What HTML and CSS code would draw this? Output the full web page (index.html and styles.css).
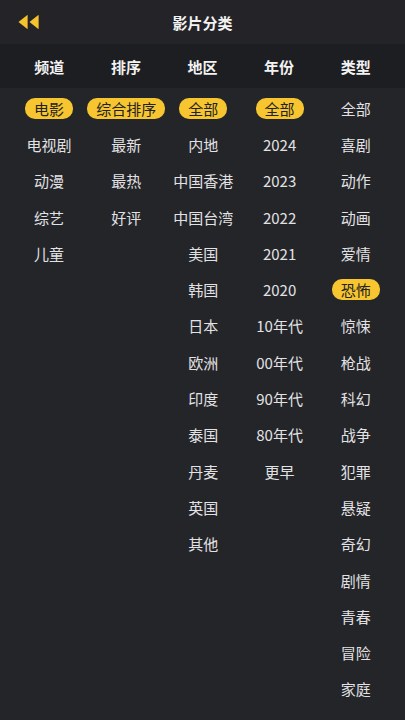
FILE: index.html
```html
<!DOCTYPE html>
<html lang="zh">
<head>
<meta charset="utf-8">
<link rel="stylesheet" href="styles.css">
</head>
<body>
<div class="app">
  <header class="topbar">
    <div class="back">
      <svg width="24" height="16" viewBox="0 0 24 16"><path d="M1.5 8 L10 1.2 Q10.6 0.8 10.6 1.6 L10.6 14.4 Q10.6 15.2 10 14.8 Z" fill="#f5c32c"/><path d="M12.5 8 L21 1.2 Q21.6 0.8 21.6 1.6 L21.6 14.4 Q21.6 15.2 21 14.8 Z" fill="#f5c32c"/></svg>
    </div>
    <div class="title">影片分类</div>
  </header>
  <div class="tabs">
    <div class="tab">频道</div>
    <div class="tab">排序</div>
    <div class="tab">地区</div>
    <div class="tab">年份</div>
    <div class="tab">类型</div>
  </div>
  <div class="cols">
    <div class="col">
      <div class="item"><span class="pill">电影</span></div>
      <div class="item">电视剧</div>
      <div class="item">动漫</div>
      <div class="item">综艺</div>
      <div class="item">儿童</div>
    </div>
    <div class="col">
      <div class="item"><span class="pill">综合排序</span></div>
      <div class="item">最新</div>
      <div class="item">最热</div>
      <div class="item">好评</div>
    </div>
    <div class="col">
      <div class="item"><span class="pill">全部</span></div>
      <div class="item">内地</div>
      <div class="item">中国香港</div>
      <div class="item">中国台湾</div>
      <div class="item">美国</div>
      <div class="item">韩国</div>
      <div class="item">日本</div>
      <div class="item">欧洲</div>
      <div class="item">印度</div>
      <div class="item">泰国</div>
      <div class="item">丹麦</div>
      <div class="item">英国</div>
      <div class="item">其他</div>
    </div>
    <div class="col">
      <div class="item"><span class="pill">全部</span></div>
      <div class="item">2024</div>
      <div class="item">2023</div>
      <div class="item">2022</div>
      <div class="item">2021</div>
      <div class="item">2020</div>
      <div class="item">10年代</div>
      <div class="item">00年代</div>
      <div class="item">90年代</div>
      <div class="item">80年代</div>
      <div class="item">更早</div>
    </div>
    <div class="col">
      <div class="item">全部</div>
      <div class="item">喜剧</div>
      <div class="item">动作</div>
      <div class="item">动画</div>
      <div class="item">爱情</div>
      <div class="item"><span class="pill">恐怖</span></div>
      <div class="item">惊悚</div>
      <div class="item">枪战</div>
      <div class="item">科幻</div>
      <div class="item">战争</div>
      <div class="item">犯罪</div>
      <div class="item">悬疑</div>
      <div class="item">奇幻</div>
      <div class="item">剧情</div>
      <div class="item">青春</div>
      <div class="item">冒险</div>
      <div class="item">家庭</div>
    </div>
  </div>
</div>
</body>
</html>
```
FILE: styles.css
```css
* { box-sizing: border-box; }
html, body { margin: 0; padding: 0; }
body {
  background: #242529;
  font-family: "Noto Sans CJK SC", "Noto Sans", sans-serif;
  color: #e2e2e4;
}
.app { width: 405px; height: 720px; overflow: hidden; background: #242529; }
.topbar {
  position: relative;
  height: 44px;
  background: #242428;
  display: flex;
  align-items: center;
  justify-content: center;
}
.back {
  position: absolute;
  left: 17px;
  top: 14px;
  height: 16px;
  display: flex;
}
.title {
  font-size: 15px;
  font-weight: 700;
  color: #f2f2f2;
}
.tabs {
  height: 44px;
  background: #1d1e21;
  display: grid;
  grid-template-columns: repeat(5, 1fr);
  padding: 0 11px;
  align-items: center;
}
.tab {
  text-align: center;
  font-size: 15px;
  font-weight: 700;
  color: #f2f2f2;
}
.cols {
  display: grid;
  grid-template-columns: repeat(5, 1fr);
  padding: 2px 11px 0;
}
.col { display: flex; flex-direction: column; }
.item {
  height: 36.3px;
  display: flex;
  align-items: center;
  justify-content: center;
  font-size: 15px;
  color: #e2e2e4;
  white-space: nowrap;
}
.pill {
  background: #f7c52f;
  color: #222;
  border-radius: 10px;
  height: 21px;
  line-height: 21px;
  padding: 0 9px;
}
```
